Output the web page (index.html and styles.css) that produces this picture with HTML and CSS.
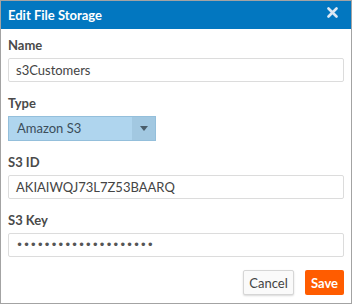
FILE: index.html
```html
<!DOCTYPE html>
<html lang="en">
<head>
    <meta charset="UTF-8">
    <meta name="viewport" content="width=device-width, initial-scale=1.0">
    <title>Edit File Storage</title>
    <link rel="stylesheet" href="styles.css">
</head>
<body>
    <div id="dialog">
        <div id="dialog-header">
            <span id="dialog-title">Edit File Storage</span>
            <svg id="dialog-close" width="11" height="11" viewBox="0 0 11 11">
                <path d="M1.5 1.5 L9.5 9.5 M9.5 1.5 L1.5 9.5" stroke="#dbe8f3" stroke-width="2.6" stroke-linecap="round"/>
            </svg>
        </div>
        <div id="dialog-body">
            <div class="field">
                <label class="field-label">Name</label>
                <div class="text-input">s3Customers</div>
            </div>
            <div class="field">
                <label class="field-label">Type</label>
                <div class="select-input">
                    <span class="select-value">Amazon S3</span>
                    <span class="select-arrow"></span>
                </div>
            </div>
            <div class="field">
                <label class="field-label">S3 ID</label>
                <div class="text-input">AKIAIWQJ73L7Z53BAARQ</div>
            </div>
            <div class="field">
                <label class="field-label">S3 Key</label>
                <div class="text-input password">&#8226;&#8226;&#8226;&#8226;&#8226;&#8226;&#8226;&#8226;&#8226;&#8226;&#8226;&#8226;&#8226;&#8226;&#8226;&#8226;&#8226;&#8226;&#8226;&#8226;</div>
            </div>
            <div id="dialog-buttons">
                <button class="btn btn-cancel">Cancel</button>
                <button class="btn btn-save">Save</button>
            </div>
        </div>
    </div>
</body>
</html>
```

FILE: styles.css
```css
body {
    margin: 0;
    font-family: Lato, "Liberation Sans", sans-serif;
}
#dialog {
    width: 352px;
    height: 304px;
    box-sizing: border-box;
    border: 1px solid #a3a3a3;
    background-color: #fff;
}
#dialog-header {
    height: 28px;
    background-color: #0277c0;
    color: #fff;
    display: flex;
    align-items: center;
    justify-content: space-between;
    padding: 0 13px 0 7px;
}
#dialog-title {
    font-size: 13px;
    font-weight: bold;
}
#dialog-close {
    margin-top: -5px;
}
#dialog-body {
    padding: 8px 7px 0 7px;
}
.field {
    margin-bottom: 13px;
}
.field-label {
    display: block;
    font-size: 13px;
    line-height: 16px;
    font-weight: bold;
    color: #4a4a4a;
    margin-bottom: 5px;
}
.text-input {
    height: 24px;
    box-sizing: border-box;
    border: 1px solid #dcdcdc;
    border-radius: 2px;
    padding: 0 7px;
    font-size: 13px;
    line-height: 22px;
    color: #444;
}
.password {
    font-family: "DejaVu Sans", sans-serif;
    font-size: 12px;
    letter-spacing: -0.2px;
    color: #555;
}
.select-input {
    width: 148px;
    height: 25px;
    box-sizing: border-box;
    border: 1px solid #94bfdb;
    background-color: #afd5ee;
    display: flex;
    font-size: 13px;
    color: #3b4d5a;
}
.select-value {
    flex: 1;
    padding-left: 8px;
    line-height: 23px;
}
.select-arrow {
    width: 23px;
    background-color: #a2c8e1;
    display: flex;
    align-items: center;
    justify-content: center;
}
.select-arrow::after {
    content: "";
    border-left: 4px solid transparent;
    border-right: 4px solid transparent;
    border-top: 5px solid #4a5d6a;
}
#dialog-buttons {
    display: flex;
    justify-content: flex-end;
    gap: 11px;
}
.btn {
    height: 25px;
    font-family: Lato, "Liberation Sans", sans-serif;
    font-size: 13px;
    border-radius: 2px;
    cursor: pointer;
}
.btn-cancel {
    width: 51px;
    padding: 0;
    background-color: #fafafa;
    color: #444;
    border: 1px solid #d6d6d6;
    box-shadow: 0 1px 2px rgba(0, 0, 0, 0.15);
}
.btn-save {
    width: 39px;
    padding: 0;
    background-color: #ff5c00;
    color: #fff;
    border: none;
    font-weight: bold;
}
```
